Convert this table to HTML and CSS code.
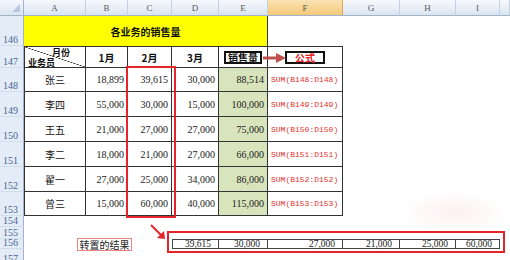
FILE: index.html
```html
<!DOCTYPE html>
<html lang="zh">
<head>
<meta charset="utf-8">
<title>各业务的销售量</title>
<link rel="stylesheet" href="styles.css">
</head>
<body>
<div class="sheet">
  <div class="corner"></div>
  <div class="ch">A</div><div class="ch">B</div><div class="ch">C</div><div class="ch">D</div><div class="ch">E</div><div class="ch sel">F</div><div class="ch">G</div><div class="ch">H</div><div class="ch">I</div><div class="ch"></div>

  <div class="rh">146</div>
  <div class="title">各业务的销售量</div>
  <div class="e s5"></div>

  <div class="rh">147</div>
  <div class="t top first hd diag"><span class="m">月份</span><span class="p">业务员</span></div>
  <div class="t top hd">1月</div>
  <div class="t top hd">2月</div>
  <div class="t top hd">3月</div>
  <div class="t top hd"><span class="tag">销售量</span></div>
  <div class="t top hd"><span class="tag red">公式</span></div>
  <div class="e s4"></div>

  <div class="rh">148</div>
  <div class="t first name">张三</div>
  <div class="t num">18,899</div><div class="t num">39,615</div><div class="t num">30,000</div>
  <div class="t num green">88,514</div>
  <div class="t f">SUM(B148:D148)</div>
  <div class="e s4"></div>

  <div class="rh">149</div>
  <div class="t first name">李四</div>
  <div class="t num">55,000</div><div class="t num">30,000</div><div class="t num">15,000</div>
  <div class="t num green">100,000</div>
  <div class="t f">SUM(B149:D149)</div>
  <div class="e s4"></div>

  <div class="rh">150</div>
  <div class="t first name">王五</div>
  <div class="t num">21,000</div><div class="t num">27,000</div><div class="t num">27,000</div>
  <div class="t num green">75,000</div>
  <div class="t f">SUM(B150:D150)</div>
  <div class="e s4"></div>

  <div class="rh">151</div>
  <div class="t first name">李二</div>
  <div class="t num">18,000</div><div class="t num">21,000</div><div class="t num">27,000</div>
  <div class="t num green">66,000</div>
  <div class="t f">SUM(B151:D151)</div>
  <div class="e s4"></div>

  <div class="rh">152</div>
  <div class="t first name">翟一</div>
  <div class="t num">27,000</div><div class="t num">25,000</div><div class="t num">34,000</div>
  <div class="t num green">86,000</div>
  <div class="t f">SUM(B152:D152)</div>
  <div class="e s4"></div>

  <div class="rh">153</div>
  <div class="t first name">曾三</div>
  <div class="t num">15,000</div><div class="t num">60,000</div><div class="t num">40,000</div>
  <div class="t num green">115,000</div>
  <div class="t f">SUM(B153:D153)</div>
  <div class="e s4"></div>

  <div class="rh">154</div>
  <div class="e s10"></div>

  <div class="rh">155</div>
  <div class="e s10"></div>

  <div class="rh">156</div>
  <div class="e s3"></div>
  <div class="tr firsttr">39,615</div>
  <div class="tr">30,000</div>
  <div class="tr">27,000</div>
  <div class="tr">21,000</div>
  <div class="tr">25,000</div>
  <div class="tr">60,000</div>
  <div class="e"></div>

  <div class="rh">157</div>
  <div class="e s10"></div>

  <div class="watermark"></div>
  <div class="hl hl-col"></div>
  <div class="hl hl-row"></div>
  <div class="label">转置的结果</div>
  <svg class="arrow-right" width="26" height="12" viewBox="0 0 26 12">
    <line x1="1" y1="6" x2="16" y2="6" stroke="#c0504d" stroke-width="3"/>
    <polygon points="14,1 24,6 14,11" fill="#c0504d"/>
  </svg>
  <svg class="arrow-diag" width="20" height="20" viewBox="0 0 20 20">
    <line x1="2" y1="2" x2="12" y2="12" stroke="#e3242b" stroke-width="2"/>
    <polygon points="8,15 16,16 15,8" fill="#e3242b"/>
  </svg>
</div>
</body>
</html>
```

FILE: styles.css
```css
* { box-sizing: border-box; margin: 0; padding: 0; }

body {
  margin: 0;
  background: #fff;
  color: #111;
  font-family: "Noto Sans CJK SC", sans-serif;
  overflow: hidden;
}

.sheet {
  position: relative;
  display: grid;
  grid-template-columns: 24px 62px 42px 44px 47px 49px 75px 57px 56px 44px 10px;
  grid-template-rows: 16px 30px 22px 24px 25px 25px 25px 25px 24px 11px 12px 10px 16px;
  width: 510px;
  height: 260px;
  overflow: hidden;
}

.corner {
  position: relative;
  background: linear-gradient(#f4f7fc, #dce5f1);
  border-right: 1px solid #9fb4cc;
  border-bottom: 1px solid #9fb4cc;
}
.corner::after {
  content: "";
  position: absolute;
  right: 3px;
  bottom: 3px;
  border-left: 8px solid transparent;
  border-bottom: 8px solid #b7c8de;
}

.ch {
  background: linear-gradient(#f6f9fd, #dbe4f0);
  border-right: 1px solid #c3d0e1;
  border-bottom: 1px solid #9fb4cc;
  display: flex;
  align-items: center;
  justify-content: center;
  font-family: "Liberation Serif", serif;
  font-size: 9px;
  color: #5a5a5a;
}
.ch.sel {
  background: linear-gradient(#fbe3b4, #f3c978);
  border-right-color: #d9a85a;
}

.rh {
  background: #e4ecf7;
  border-right: 1px solid #9fb4cc;
  border-bottom: 1px solid #d3deec;
  display: flex;
  align-items: flex-end;
  padding-left: 3px;
  font-family: "Liberation Serif", serif;
  font-size: 10px;
  line-height: 10px;
  color: #4a6590;
}

.title {
  grid-column: span 5;
  background: #ffff00;
  border-right: 1px solid #333;
  display: flex;
  align-items: center;
  justify-content: center;
  font-weight: 700;
  font-size: 10px;
}

.e { background: #fff; }
.s3 { grid-column: span 3; }
.s4 { grid-column: span 4; }
.s5 { grid-column: span 5; }
.s10 { grid-column: span 10; }

.t {
  border-right: 1px solid #333;
  border-bottom: 1px solid #333;
  display: flex;
  align-items: center;
  font-size: 10px;
}
.top { border-top: 1px solid #333; }
.first { border-left: 1px solid #333; }

.hd {
  justify-content: center;
  font-weight: 700;
}

.diag {
  flex-direction: column;
  align-items: stretch;
  justify-content: space-between;
  padding: 1px 3px 0;
  font-size: 9px;
  line-height: 9px;
  background: linear-gradient(to top right, transparent calc(50% - 0.6px), #333 50%, transparent calc(50% + 0.6px));
}
.diag .m { align-self: flex-end; margin-right: 12px; }
.diag .p { align-self: flex-start; }

.name { justify-content: center; }

.num {
  justify-content: flex-end;
  padding-right: 3px;
  font-family: "Liberation Serif", serif;
  font-size: 10px;
  color: #222;
}
.green { background: #d8e4bc; }

.f {
  padding-left: 3px;
  font-family: "Liberation Mono", monospace;
  font-size: 8px;
  color: #e3302c;
}

.tag {
  border: 2px solid #111;
  background: #fff;
  padding: 0 2px;
  font-size: 10px;
  line-height: 9px;
  font-weight: 700;
}
.tag.red { color: #e8201f; padding: 0 8px; }

.tr {
  border-top: 1px solid #444;
  border-bottom: 1px solid #444;
  border-right: 1px solid #444;
  display: flex;
  align-items: center;
  justify-content: flex-end;
  padding-right: 7px;
  font-family: "Liberation Serif", serif;
  font-size: 9.5px;
  line-height: 8px;
  color: #222;
}
.firsttr { border-left: 1px solid #444; }

.hl {
  position: absolute;
  border: 2px solid #e3242b;
}
.hl-col { left: 126px; top: 66px; width: 50px; height: 152px; }
.hl-row { left: 167px; top: 231px; width: 338px; height: 22px; }

.label {
  position: absolute;
  left: 77px;
  top: 238px;
  width: 55px;
  height: 13px;
  border: 1px solid #e88585;
  background: #fff;
  display: flex;
  align-items: center;
  justify-content: center;
  font-size: 10px;
  line-height: 10px;
  color: #222;
}

.arrow-right { position: absolute; left: 262px; top: 52px; }
.arrow-diag { position: absolute; left: 149px; top: 223px; }

.watermark {
  position: absolute;
  left: 400px;
  top: 190px;
  width: 110px;
  height: 45px;
  background: radial-gradient(ellipse at center, rgba(235, 160, 160, 0.16), rgba(235, 160, 160, 0) 70%);
}
```
